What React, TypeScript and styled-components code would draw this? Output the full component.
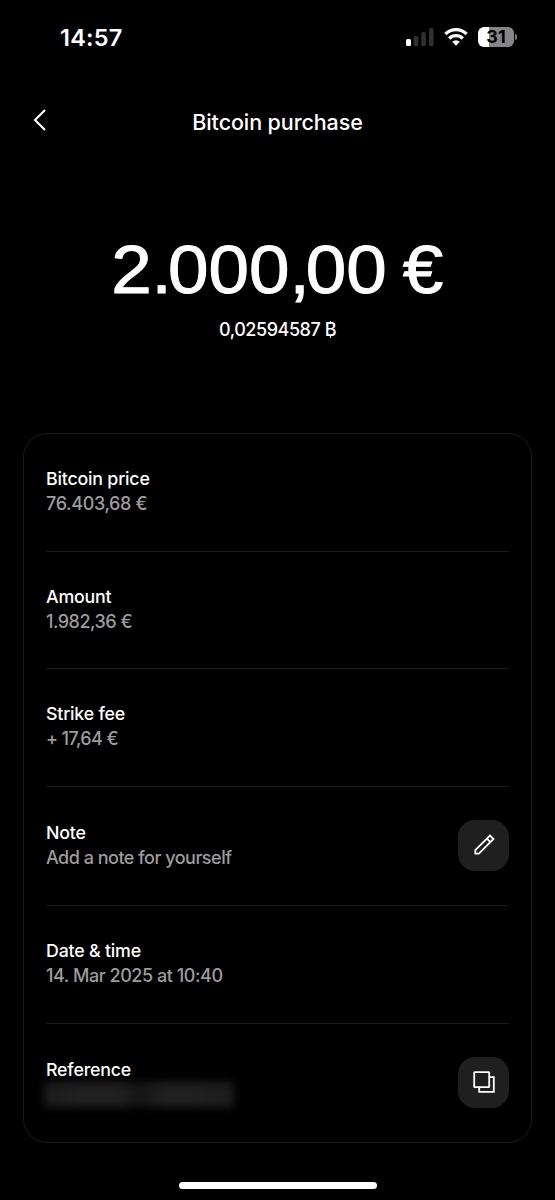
import React from "react";
import styled, { createGlobalStyle } from "styled-components";

const GlobalStyle = createGlobalStyle`
  * { box-sizing: border-box; }
  body { margin: 0; background: #000; }
`;

const Screen = styled.main`
  width: 555px;
  height: 1200px;
  overflow: hidden;
  display: flex;
  flex-direction: column;
  align-items: center;
  background: #000;
  color: #fff;
  font-family: Inter, "Liberation Sans", sans-serif;
  font-weight: 500;
  white-space: nowrap;
`;

const StatusBar = styled.div`
  width: 100%;
  height: 74px;
  padding: 0 41px 0 60px;
  display: flex;
  align-items: center;
  justify-content: space-between;
`;

const Clock = styled.time`
  font-size: 23.5px;
  font-weight: 600;
  letter-spacing: 0.2px;
`;

const StatusIcons = styled.div`
  display: flex;
  align-items: center;
  gap: 10px;
`;

const Battery = styled.div`
  position: relative;
  width: 36px;
  height: 20px;
  border-radius: 6px;
  background: linear-gradient(90deg, #fff 31%, #868686 31%);
  color: #000;
  font-size: 18px;
  font-weight: 700;
  line-height: 20px;
  text-align: center;

  &::after {
    content: "";
    position: absolute;
    left: 37px;
    top: 7px;
    width: 2px;
    height: 6px;
    border-radius: 0 2px 2px 0;
    background: #777;
  }
`;

const Header = styled.header`
  width: 100%;
  height: 95px;
  padding: 0 32px;
  display: grid;
  grid-template-columns: 16px 1fr 16px;
  align-items: center;
`;

const BackButton = styled.button`
  display: flex;
  padding: 0 0 3px;
  border: 0;
  background: none;
  color: inherit;
`;

const Title = styled.h1`
  margin: 0;
  font-size: 21.5px;
  font-weight: 450;
  line-height: 28px;
  letter-spacing: -0.1px;
  text-align: center;
`;

const Summary = styled.section`
  height: 264px;
  padding-top: 60px;
  text-align: center;
`;

const Total = styled.div`
  font-family: "Liberation Sans", Arial, sans-serif;
  font-size: 68px;
  font-weight: 400;
  line-height: 80px;
  word-spacing: -4px;
  transform: scaleX(1.07);
  -webkit-text-stroke: 1px #fff;
`;

const Separator = styled.span`
  letter-spacing: -3.6px;
`;

const BitcoinTotal = styled.div`
  margin-top: 10px;
  font-size: 18px;
  line-height: 22px;
  letter-spacing: -0.45px;
`;

const BitcoinSign = styled.span`
  position: relative;

  &::before,
  &::after {
    content: "";
    position: absolute;
    left: 5px;
    width: 1.5px;
    height: 3px;
    background: #fff;
  }

  &::before { top: 2px; }
  &::after { bottom: 2px; }
`;

const Card = styled.section`
  width: 509px;
  height: 710px;
  padding: 0 22px;
  border: 1px solid #1b1b1b;
  border-radius: 24px;
`;

const Row = styled.div<{ $height?: number }>`
  height: ${({ $height = 118 }) => $height}px;
  padding-bottom: 2px;
  display: flex;
  align-items: center;
  justify-content: space-between;

  &:not(:last-child) {
    border-bottom: 1px solid #1b1b1b;
  }
`;

const Label = styled.div`
  font-size: 17.8px;
  line-height: 24px;
  letter-spacing: -0.2px;
`;

const Value = styled.div<{ $spacing?: number }>`
  font-size: 18px;
  font-weight: 450;
  line-height: 25px;
  color: #9c9c9c;
  letter-spacing: ${({ $spacing = -0.5 }) => $spacing}px;
`;

const Redacted = styled.div`
  width: 190px;
  height: 25px;
  margin-left: -2px;
  background: linear-gradient(90deg, #1c1c1c, #202020 20% 40%, #141414 50%, #202020 63% 75%, #1c1c1c);
  filter: blur(4px);
`;

const IconButton = styled.button`
  width: 51px;
  height: 51px;
  padding: 0;
  display: flex;
  align-items: center;
  justify-content: center;
  border: 0;
  border-radius: 17px;
  background: #1f1f1f;
  color: #fff;
`;

const HomeIndicator = styled.div`
  width: 198px;
  height: 7px;
  margin-top: 39px;
  border-radius: 4px;
  background: #fff;
`;

const SignalIcon = () => (
  <svg width="28" height="18" viewBox="0 0 28 18">
    <rect x="0" y="11" width="5" height="7" rx="1.5" fill="#fff" />
    <rect x="7.7" y="8" width="4.6" height="10" rx="1.5" fill="#303030" />
    <rect x="15.3" y="4" width="4.6" height="14" rx="1.5" fill="#303030" />
    <rect x="23" y="0" width="4.6" height="18" rx="1.5" fill="#303030" />
  </svg>
);

const WifiIcon = () => (
  <svg width="24" height="18" viewBox="0 0 24 18" fill="none" stroke="#fff" strokeWidth="3.3">
    <path d="M1.4 6.1a15 15 0 0 1 21.2 0" />
    <path d="M5.2 10.5a9.6 9.6 0 0 1 13.6 0" />
    <path d="M8.2 13.8a5.4 5.4 0 0 1 7.6 0L12 17.7Z" fill="#fff" stroke="none" />
  </svg>
);

const BackIcon = () => (
  <svg width="16" height="24" viewBox="0 0 16 24" fill="none" stroke="currentColor" strokeWidth="2.1">
    <path d="M13 2 3 12l10 10" />
  </svg>
);

const PencilIcon = () => (
  <svg width="22" height="22" viewBox="0 0 22 22" fill="none" stroke="currentColor" strokeWidth="1.8">
    <path d="M2.3 19.7v-3.5L17 1.5l3.5 3.5L5.8 19.7Z" />
    <path d="m13.9 4.6 3.5 3.5" />
  </svg>
);

const CopyIcon = () => (
  <svg width="22" height="22" viewBox="0 0 22 22" fill="none" stroke="currentColor" strokeWidth="1.8">
    <rect x="1.2" y="1.2" width="15" height="15" rx=".5" />
    <path d="M16.2 6.2h4.6v14.6H6.2v-4.6" />
  </svg>
);

const details = [
  { label: "Bitcoin price", value: "76.403,68 €", spacing: -0.35 },
  { label: "Amount", value: "1.982,36 €", height: 117 },
  { label: "Strike fee", value: "+ 17,64 €", spacing: -0.6 },
  { label: "Note", value: "Add a note for yourself", height: 119, icon: <PencilIcon /> },
  { label: "Date & time", value: "14. Mar 2025 at 10:40", spacing: -0.45 },
  { label: "Reference", icon: <CopyIcon /> },
];

export default function App() {
  return (
    <Screen>
      <GlobalStyle />
      <StatusBar>
        <Clock>14:57</Clock>
        <StatusIcons>
          <SignalIcon />
          <WifiIcon />
          <Battery>31</Battery>
        </StatusIcons>
      </StatusBar>
      <Header>
        <BackButton aria-label="Back"><BackIcon /></BackButton>
        <Title>Bitcoin purchase</Title>
      </Header>
      <Summary>
        <Total>
          2<Separator>.</Separator>000<Separator>,</Separator>00 €
        </Total>
        <BitcoinTotal>
          0,02594587 <BitcoinSign aria-label="bitcoin">B</BitcoinSign>
        </BitcoinTotal>
      </Summary>
      <Card>
        {details.map(({ label, value, height, spacing, icon }) => (
          <Row key={label} $height={height}>
            <div>
              <Label>{label}</Label>
              {value ? <Value $spacing={spacing}>{value}</Value> : <Redacted />}
            </div>
            {icon && <IconButton aria-label={label}>{icon}</IconButton>}
          </Row>
        ))}
      </Card>
      <HomeIndicator />
    </Screen>
  );
}
